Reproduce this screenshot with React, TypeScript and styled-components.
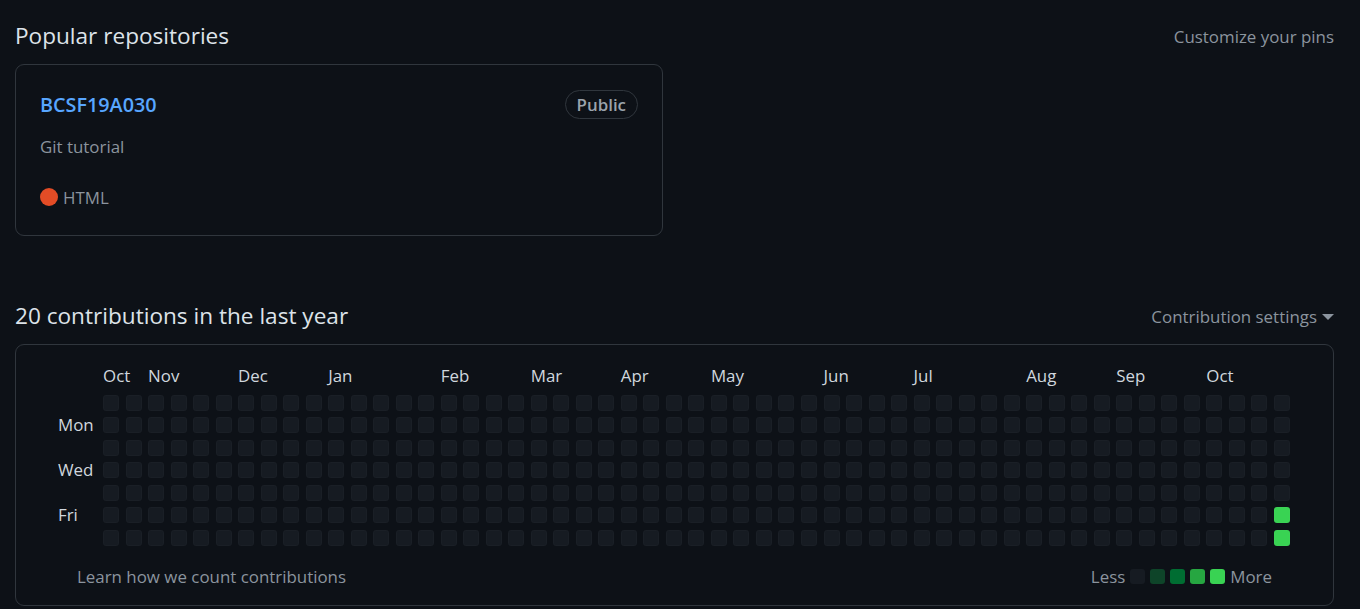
import React from "react";
import styled, { createGlobalStyle } from "styled-components";

const GlobalStyle = createGlobalStyle`
  html, body {
    margin: 0;
    padding: 0;
    background: #0d1117;
  }
  body {
    font-family: "Open Sans", "Noto Sans", sans-serif;
    color: #d0d7de;
  }
`;

const Page = styled.main`
  width: 1360px;
  box-sizing: border-box;
  padding: 19px 26px 0 15px;
  display: flex;
  flex-direction: column;
`;

const SectionHeader = styled.div<{ $top?: number }>`
  display: flex;
  align-items: center;
  justify-content: space-between;
  margin-top: ${(p) => p.$top ?? 0}px;
  margin-bottom: 11px;
  height: 34px;
`;

const Title = styled.h2`
  margin: 0;
  font-size: 22.6px;
  line-height: 34px;
  font-weight: 400;
  color: #dde3e9;
`;

const SideLink = styled.a`
  font-size: 16.9px;
  line-height: 25px;
  color: #8b949e;
  text-decoration: none;
  display: flex;
  align-items: center;
`;

const Caret = styled.span`
  display: inline-block;
  width: 0;
  height: 0;
  margin-left: 5px;
  margin-top: 2px;
  border-top: 6px solid #8b949e;
  border-left: 6px solid transparent;
  border-right: 6px solid transparent;
`;

const Card = styled.div<{ $width?: string }>`
  box-sizing: border-box;
  width: ${(p) => p.$width ?? "100%"};
  border: 1px solid #30363d;
  border-radius: 9px;
`;

const RepoCard = styled(Card)`
  padding: 24px;
  height: 172px;
  display: flex;
  flex-direction: column;
`;

const RepoTop = styled.div`
  display: flex;
  align-items: center;
  justify-content: space-between;
  height: 31px;
`;

const RepoName = styled.a`
  font-size: 19.8px;
  font-weight: 600;
  color: #58a6ff;
  text-decoration: none;
  line-height: 31px;
`;

const Badge = styled.span`
  box-sizing: border-box;
  height: 29px;
  padding: 0 11px;
  border: 1px solid #30363d;
  border-radius: 2em;
  font-size: 16.9px;
  font-weight: 600;
  line-height: 27px;
  color: #9ba3ac;
`;

const Description = styled.p`
  margin: 13.5px 0 0;
  font-size: 16.9px;
  line-height: 25px;
  color: #8b949e;
`;

const LangRow = styled.div`
  margin-top: 26px;
  display: flex;
  align-items: center;
  font-size: 16.9px;
  line-height: 25px;
  color: #8b949e;
`;

const LangDot = styled.span<{ $color: string }>`
  width: 18px;
  height: 18px;
  border-radius: 50%;
  background: ${(p) => p.$color};
  margin-right: 5px;
`;

const GraphCard = styled(Card)`
  padding: 20px 42px 15px 42px;
  height: 262px;
`;

const Graph = styled.div`
  display: grid;
  grid-template-columns: 45px 1187px;
  grid-template-rows: 22px auto;
  row-gap: 7.5px;
`;

const MonthRow = styled.div`
  grid-column: 2;
  display: grid;
  grid-template-columns: repeat(53, 16px);
  column-gap: 6.52px;
  align-items: center;
`;

const MonthLabel = styled.span<{ $col: number }>`
  grid-column: ${(p) => p.$col + 1};
  grid-row: 1;
  white-space: nowrap;
  font-size: 16.9px;
  line-height: 22px;
  color: #d0d7de;
`;

const DayLabels = styled.div`
  grid-column: 1;
  display: grid;
  grid-template-rows: repeat(7, 16px);
  row-gap: 6.5px;
`;

const DayLabel = styled.span<{ $row: number }>`
  grid-row: ${(p) => p.$row + 1};
  font-size: 16.9px;
  line-height: 16px;
  color: #d0d7de;
  white-space: nowrap;
`;

const Cells = styled.div`
  grid-column: 2;
  display: grid;
  grid-template-rows: repeat(7, 16px);
  grid-auto-flow: column;
  grid-auto-columns: 16px;
  row-gap: 6.5px;
  column-gap: 6.52px;
`;

const LEVELS = ["#161b22", "#0e4429", "#006d32", "#26a641", "#39d353"];

const Cell = styled.span<{ $level: number }>`
  width: 16px;
  height: 16px;
  border-radius: 3px;
  background: ${(p) => LEVELS[p.$level]};
  box-shadow: inset 0 0 0 1px rgba(255, 255, 255, 0.02);
`;

const Footer = styled.div`
  margin-top: 17px;
  height: 27px;
  padding: 0 18px 0 19px;
  width: 1232px;
  box-sizing: border-box;
  display: flex;
  align-items: center;
  justify-content: space-between;
`;

const MutedLink = styled.a`
  font-size: 16.9px;
  line-height: 27px;
  color: #8b949e;
  text-decoration: none;
`;

const Legend = styled.div`
  display: flex;
  align-items: center;
  gap: 5px;
  font-size: 16.9px;
  line-height: 27px;
  color: #8b949e;
`;

const LegendCell = styled.span<{ $level: number }>`
  width: 15px;
  height: 15px;
  border-radius: 3px;
  background: ${(p) => LEVELS[p.$level]};
`;

const months: [string, number][] = [
  ["Oct", 0],
  ["Nov", 2],
  ["Dec", 6],
  ["Jan", 10],
  ["Feb", 15],
  ["Mar", 19],
  ["Apr", 23],
  ["May", 27],
  ["Jun", 32],
  ["Jul", 36],
  ["Aug", 41],
  ["Sep", 45],
  ["Oct", 49],
];

const days: [string, number][] = [
  ["Mon", 1],
  ["Wed", 3],
  ["Fri", 5],
];

const WEEKS = 53;

function levelFor(week: number, day: number): number {
  if (week === WEEKS - 1 && (day === 5 || day === 6)) return 4;
  return 0;
}

export default function App() {
  const cells: React.ReactNode[] = [];
  for (let w = 0; w < WEEKS; w++) {
    for (let d = 0; d < 7; d++) {
      cells.push(<Cell key={`${w}-${d}`} $level={levelFor(w, d)} />);
    }
  }

  return (
    <>
      <GlobalStyle />
      <Page>
        <SectionHeader>
          <Title>Popular repositories</Title>
          <SideLink href="#">Customize your pins</SideLink>
        </SectionHeader>
        <RepoCard $width="648px">
          <RepoTop>
            <RepoName href="#">BCSF19A030</RepoName>
            <Badge>Public</Badge>
          </RepoTop>
          <Description>Git tutorial</Description>
          <LangRow>
            <LangDot $color="#e34c26" />
            HTML
          </LangRow>
        </RepoCard>

        <SectionHeader $top={63}>
          <Title>20 contributions in the last year</Title>
          <SideLink href="#">
            Contribution settings
            <Caret />
          </SideLink>
        </SectionHeader>
        <GraphCard>
          <Graph>
            <MonthRow>
              {months.map(([m, c], i) => (
                <MonthLabel key={i} $col={c}>
                  {m}
                </MonthLabel>
              ))}
            </MonthRow>
            <DayLabels>
              {days.map(([d, r]) => (
                <DayLabel key={d} $row={r}>
                  {d}
                </DayLabel>
              ))}
            </DayLabels>
            <Cells>{cells}</Cells>
          </Graph>
          <Footer>
            <MutedLink href="#">Learn how we count contributions</MutedLink>
            <Legend>
              Less
              {[0, 1, 2, 3, 4].map((l) => (
                <LegendCell key={l} $level={l} />
              ))}
              More
            </Legend>
          </Footer>
        </GraphCard>
      </Page>
    </>
  );
}
